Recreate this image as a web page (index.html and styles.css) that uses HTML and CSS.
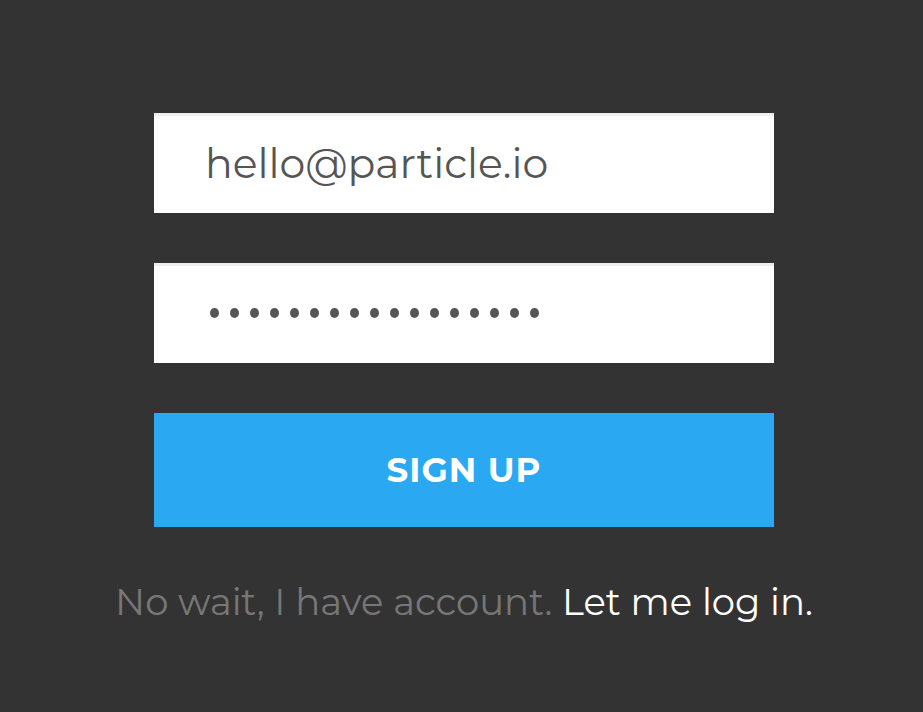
FILE: index.html
```html
<!DOCTYPE html>
<html>
<head>
<meta charset="utf-8">
<link rel="stylesheet" href="styles.css">
</head>
<body>
<main class="form">
  <div class="field"><span class="value">hello@particle.io</span></div>
  <div class="field"><span class="dots"><i></i><i></i><i></i><i></i><i></i><i></i><i></i><i></i><i></i><i></i><i></i><i></i><i></i><i></i><i></i><i></i><i></i></span></div>
  <button class="submit">SIGN UP</button>
  <p class="switch"><span class="muted">No wait, I have account.</span> <a class="link">Let me log in.</a></p>
</main>
</body>
</html>
```
FILE: styles.css
```css
html, body {
  margin: 0;
  background: #333333;
}
body {
  font-family: "Montserrat", "Open Sans", sans-serif;
}
.form {
  width: 620px;
  margin-left: 154px;
  padding-top: 113px;
  display: flex;
  flex-direction: column;
}
.field {
  height: 100px;
  background: #ffffff;
  box-shadow: inset 0 3px 0 #eeeeee;
  margin-bottom: 50px;
  display: flex;
  align-items: center;
  padding-left: 51px;
  box-sizing: border-box;
}
.value {
  font-size: 41px;
  color: #555555;
  font-weight: 400;
  line-height: 50px;
}
.dots {
  display: flex;
  gap: 11px;
  padding-left: 5px;
}
.dots i {
  display: block;
  width: 9px;
  height: 10px;
  border-radius: 50%;
  background: #555555;
}
.submit {
  height: 114px;
  border: 0;
  background: #2aa8f2;
  color: #ffffff;
  font-family: "Montserrat", "Open Sans", sans-serif;
  font-weight: 700;
  font-size: 34px;
  letter-spacing: 1px;
  padding: 0;
}
.switch {
  margin: 53px -80px 0;
  text-align: center;
  font-size: 37px;
  line-height: 44px;
}
.muted {
  color: #777777;
}
.link {
  color: #ffffff;
}
```
